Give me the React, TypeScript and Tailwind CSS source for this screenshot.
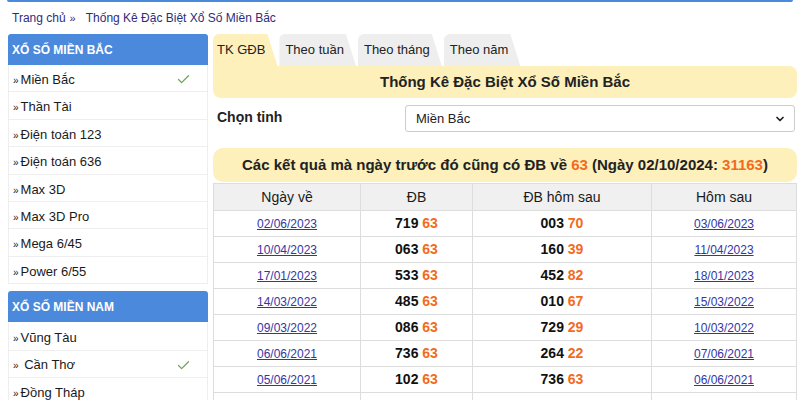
import { Check, ChevronDown } from 'lucide-react'

const northItems = ['Miền Bắc', 'Thần Tài', 'Điện toán 123', 'Điện toán 636', 'Max 3D', 'Max 3D Pro', 'Mega 6/45', 'Power 6/55']
const southItems = ['Vũng Tàu', ' Cần Thơ', 'Đồng Tháp']

const tabs = ['TK GĐB', 'Theo tuần', 'Theo tháng', 'Theo năm']

const rows = [
  ['02/06/2023', '719', '003', '70', '03/06/2023'],
  ['10/04/2023', '063', '160', '39', '11/04/2023'],
  ['17/01/2023', '533', '452', '82', '18/01/2023'],
  ['14/03/2022', '485', '010', '67', '15/03/2022'],
  ['09/03/2022', '086', '729', '29', '10/03/2022'],
  ['06/06/2021', '736', '264', '22', '07/06/2021'],
  ['05/06/2021', '102', '736', '63', '06/06/2021'],
]

function SideHeader({ title }: { title: string }) {
  return (
    <div className="flex h-[31px] items-center rounded-t-[3px] bg-[#4a89dc] px-[4px] text-[12px] font-bold text-white">
      {title}
    </div>
  )
}

function SideItem({ label, active }: { label: string; active?: boolean }) {
  return (
    <div className="flex h-[27.4px] items-center justify-between border-x border-b border-[#eeeeee] pl-[4px] pr-[16px] pt-[3px] text-[13px] text-[#1a1a1a]">
      <span className="whitespace-pre">
        <span className="mr-[2px] text-[10px]">»</span>
        {label}
      </span>
      {active && <Check size={15} strokeWidth={2} className="text-[#6aa84f]" />}
    </div>
  )
}

export default function App() {
  return (
    <div className="h-[400px] w-[800px] overflow-hidden bg-white font-['Liberation_Sans',Arial,sans-serif]">
      <div className="mx-[7px] h-[2px] rounded-b bg-[#4a89dc]" />
      <div className="flex h-[32px] items-center px-3 text-[12px] text-[#2d2d7d]">
        Trang chủ
        <span className="ml-[4px] mr-[10px] text-[11px]">»</span>
        Thống Kê Đặc Biệt Xổ Số Miền Bắc
      </div>

      <div className="flex gap-[5px] pl-[8px] pr-[3px]">
        <aside className="w-[200px] shrink-0">
          <SideHeader title="XỔ SỐ MIỀN BẮC" />
          {northItems.map((item, i) => (
            <SideItem key={item} label={item} active={i === 0} />
          ))}
          <div className="h-[7px]" />
          <SideHeader title="XỔ SỐ MIỀN NAM" />
          <div className="h-[1px]" />
          {southItems.map((item, i) => (
            <SideItem key={item} label={item} active={i === 1} />
          ))}
        </aside>

        <main className="min-w-0 flex-1">
          <div className="flex h-[32px] items-end gap-[2px]">
            {tabs.map((tab, i) => (
              <div
                key={tab}
                className={`flex h-[32px] items-center rounded-tl-[6px] pb-[1px] pl-[4px] pr-[12px] text-[13px] text-[#222] [clip-path:polygon(0_0,calc(100%-10px)_0,100%_100%,0_100%)] ${
                  i === 0 ? 'bg-[#fdf0bb]' : 'bg-[#eeeeee] pl-[6px]'
                }`}
              >
                {tab}
              </div>
            ))}
          </div>

          <div className="flex h-[32px] items-center justify-center rounded-b-[8px] rounded-tr-[8px] bg-[#fdf0bb] text-[15px] font-bold text-[#222]">
            Thống Kê Đặc Biệt Xổ Số Miền Bắc
          </div>

          <div className="mt-[7px] flex h-[27px] items-center">
            <div className="w-[192px] pb-[3px] pl-[4px] text-[14px] font-bold text-[#222]">Chọn tỉnh</div>
            <div className="mr-[2px] flex h-full flex-1 items-center justify-between rounded-[3px] border border-[#cccccc] pl-[10px] pr-[8px] text-[13px] text-[#222]">
              Miền Bắc
              <ChevronDown size={12} strokeWidth={3.5} className="text-[#222]" />
            </div>
          </div>

          <div className="mt-[16px] flex h-[34px] items-center justify-center rounded-[10px] bg-[#fdf0bb] text-[15px] font-bold text-[#222]">
            Các kết quả mà ngày trước đó cũng có ĐB về&nbsp;<span className="text-[#f26b21]">63</span>&nbsp;(Ngày 02/10/2024:&nbsp;
            <span className="text-[#f26b21]">31163</span>)
          </div>

          <div className="mt-[1px] grid grid-cols-[147px_112px_179px_1fr] border-l border-t border-[#dddddd] text-center">
            {['Ngày về', 'ĐB', 'ĐB hôm sau', 'Hôm sau'].map((h) => (
              <div key={h} className="flex h-[27px] items-center justify-center border-b border-r border-[#dddddd] bg-[#f0f0f0] text-[14px] text-[#1a1a1a]">
                {h}
              </div>
            ))}
            {rows.map(([day, db, next, nextTail, nextDay]) => (
              <div key={day} className="contents">
                <div className="flex h-[26px] items-center justify-center border-b border-r border-[#dddddd]">
                  <a className="text-[12px] text-[#3535a5] underline">{day}</a>
                </div>
                <div className="flex h-[26px] items-center justify-center border-b border-r border-[#dddddd] text-[14px] font-bold text-[#111]">
                  {db}&nbsp;<span className="text-[#f26b21]">63</span>
                </div>
                <div className="flex h-[26px] items-center justify-center border-b border-r border-[#dddddd] text-[14px] font-bold text-[#111]">
                  {next}&nbsp;<span className="text-[#f26b21]">{nextTail}</span>
                </div>
                <div className="flex h-[26px] items-center justify-center border-b border-r border-[#dddddd]">
                  <a className="text-[12px] text-[#3535a5] underline">{nextDay}</a>
                </div>
              </div>
            ))}
            {[0, 1, 2, 3].map((i) => (
              <div key={i} className="h-[26px] border-b border-r border-[#dddddd]" />
            ))}
          </div>
        </main>
      </div>
    </div>
  )
}
